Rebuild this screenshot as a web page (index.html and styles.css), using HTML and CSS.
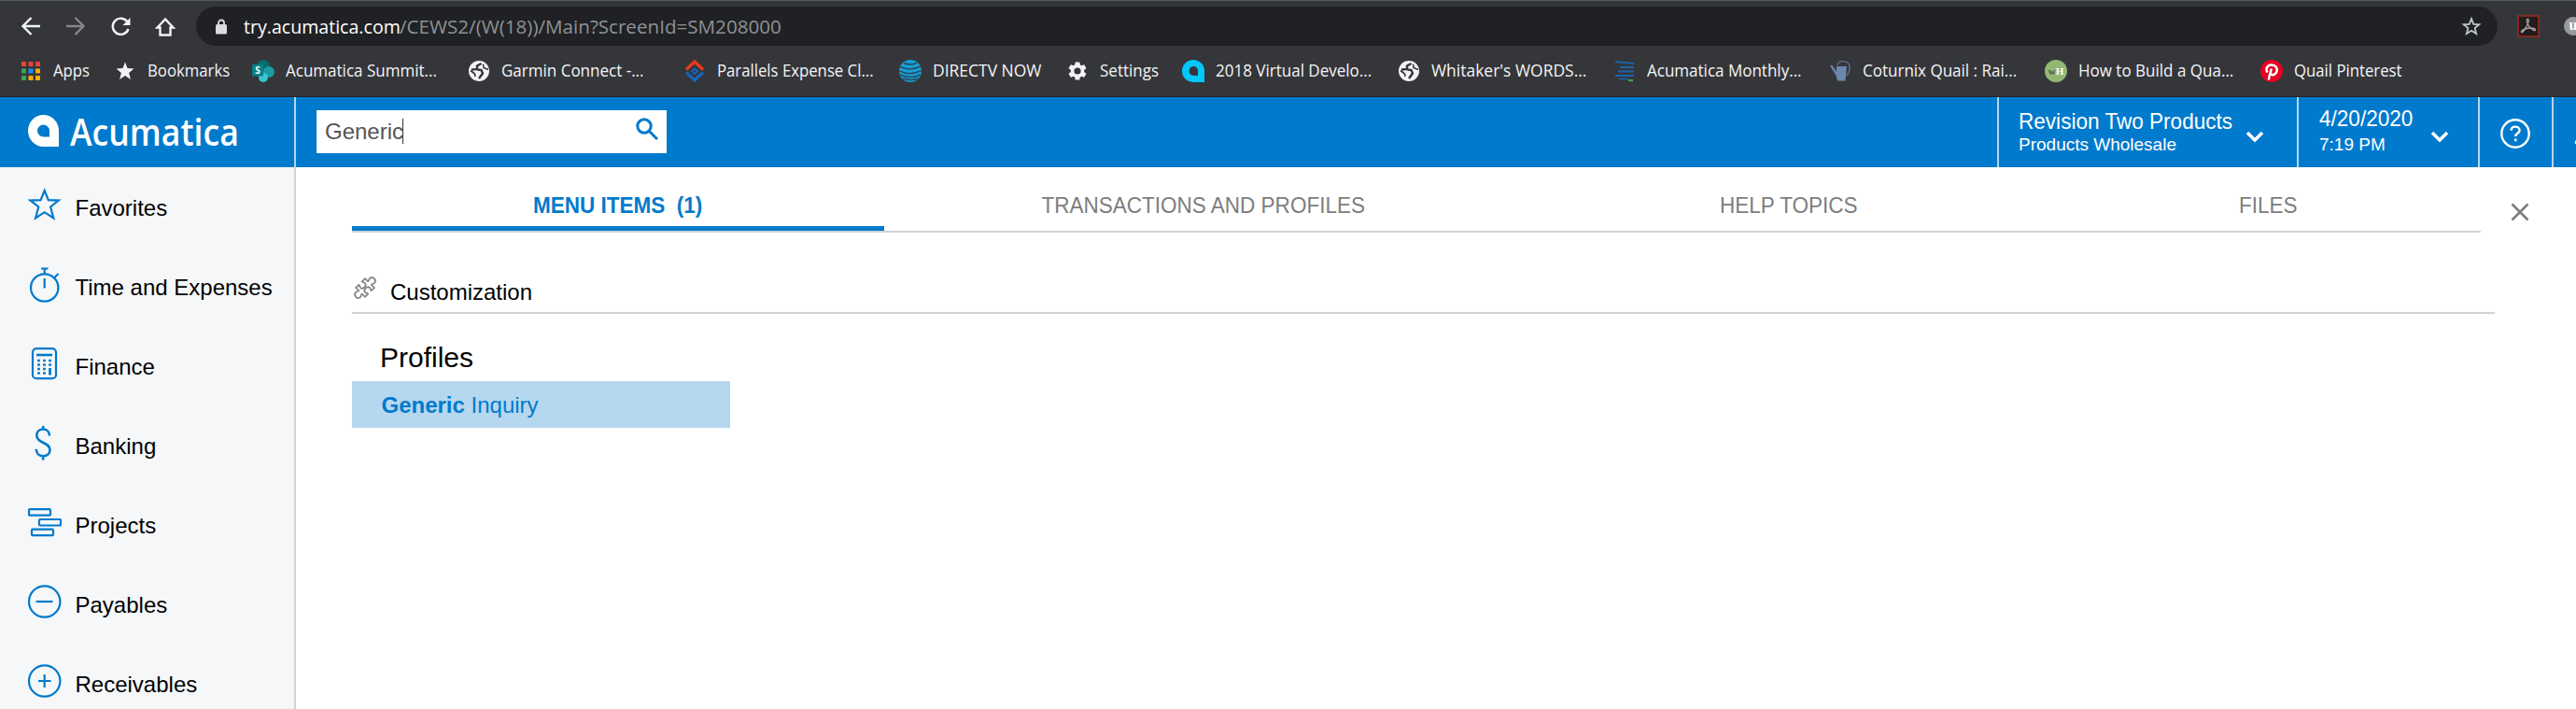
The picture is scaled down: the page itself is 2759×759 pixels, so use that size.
FILE: index.html
```html
<!DOCTYPE html>
<html lang="en">
<head>
<meta charset="utf-8">
<title>Acumatica</title>
<link rel="stylesheet" href="styles.css">
</head>
<body>
<svg class="defs" aria-hidden="true">
  <symbol id="globe" viewBox="0 0 24 24"><circle cx="12" cy="12" r="11" fill="#f1f3f4"/><path d="M14.500 4 10 6.500v3.500l-6 .5M10.500 10.500l4 .5 1.500 3.500-4 5.500" fill="none" stroke="#35363a" stroke-width="2.400"/><path d="M3 11.500l4.500 3.500.5 3M16.500 4.500l.5 4 5 2" fill="none" stroke="#35363a" stroke-width="1.600"/></symbol>
</svg>

<div class="browser">
  <div class="toolbar">
    <svg class="nav" viewBox="0 0 210 50" fill="none" stroke="#f1f3f4" stroke-width="2.400">
      <path d="M43 27H25M33.500 18 24.500 27l9 9"/>
      <path d="M71 27h18M80.500 18l9 9-9 9" stroke="#85878a"/>
      <path d="M136.500 22.500A8.600 8.600 0 1 0 137.500 30"/><path d="M139.500 18v8h-8z" fill="#f1f3f4" stroke="none"/>
      <path d="M177 19.500l-8.500 9h3v8h11v-8h3z"/>
    </svg>
    <div class="omnibox">
      <svg class="lock" viewBox="0 0 12 17"><path d="M3 7V4.500a3 3 0 0 1 6 0V7" fill="none" stroke="#dadce0" stroke-width="1.800"/><rect y="6" width="12" height="10.500" rx="1.500" fill="#dadce0"/></svg>
      <div class="url"><span class="host">try.acumatica.com</span><span class="path">/CEWS2/(W(18))/Main?ScreenId=SM208000</span></div>
      <svg class="fav" viewBox="0 0 24 24" fill="none" stroke="#c4c7ca" stroke-width="2"><path d="M12 3.500l2.500 6.100 6.500.5-5 4.200 1.600 6.400L12 17.200l-5.600 3.500L8 14.300l-5-4.200 6.500-.5z"/></svg>
    </div>
    <svg class="pdf" viewBox="0 0 24 24"><rect x="1" y="1" width="22" height="22" fill="#231c1e" stroke="#9c2a1c" stroke-width="1.600"/><path d="M11 4.500c3 0 .5 5-1.500 8.500-1.500 3-4 6.500-5 5.500-.8-1.500 4-4.500 9-4.500 4.500-.2 6 .8 6 2 0 1.500-3.500 0-6.500-3.500C10.500 9 9.500 4.800 11 4.500z" fill="none" stroke="#aaa5a5" stroke-width="1.300"/></svg>
    <div class="ublock">u</div>
  </div>
  <div class="bookmarks">
    <div class="bm snug"><svg viewBox="0 0 24 24"><path fill="#ea4335" d="M2 2h5v5H2zM9.500 2h5v5h-5zM17 2h5v5h-5z"/><path fill="#34a853" d="M2 9.500h5v5H2zM2 17h5v5H2z"/><path fill="#1a8cff" d="M9.500 9.500h5v5h-5z"/><path fill="#fbab05" d="M17 9.500h5v5h-5zM9.500 17h5v5h-5zM17 17h5v5h-5z"/></svg><span>Apps</span></div>
    <div class="bm snug"><svg viewBox="0 0 24 24"><path fill="#f1f3f4" d="M12 2.500l2.500 6.600 7 .4-5.400 4.500 1.800 7L12 17l-5.900 4 1.800-7-5.400-4.500 7-.4z"/></svg><span>Bookmarks</span></div>
    <div class="bm"><svg viewBox="0 0 24 24"><circle cx="12" cy="7" r="7" fill="#036c70"/><circle cx="18" cy="13" r="6" fill="#1a9ba1"/><circle cx="12" cy="19" r="5" fill="#37c6d0"/><rect y="5" width="12" height="12.500" rx="1" fill="#038387"/><text class="sp" x="6" y="15">S</text></svg><span>Acumatica Summit...</span></div>
    <div class="bm"><svg><use href="#globe"/></svg><span>Garmin Connect -...</span></div>
    <div class="bm snug"><svg viewBox="0 0 24 24" fill="none" stroke-width="3.400"><path d="M3 10.500l9-8.500 9 8.500" stroke="#e8391e"/><path d="M3 13.500l9 8.500 9-8.500" stroke="#1664b8"/><path d="M12 9.500l2.800 2.800L12 15l-2.800-2.700z" stroke="#1664b8" stroke-width="2"/></svg><span>Parallels Expense Cl...</span></div>
    <div class="bm loose"><svg viewBox="0 0 24 24"><circle cx="12" cy="12" r="12" fill="#159fd5"/><g fill="none" stroke="#2c4a5c" stroke-width="1.500"><path d="M5 3.500q7 3 14 0M1 7.500q11 5 22-.5M0 12q12 5.500 24-.5M1 16q11 5 22 0M4 20q9 3 16 0"/></g></svg><span>DIRECTV NOW</span></div>
    <div class="bm"><svg viewBox="0 0 24 24"><path fill="#f1f3f4" d="M19.140 12.940c.04-.3.06-.61.06-.94s-.02-.64-.07-.94l2.030-1.580c.18-.14.23-.41.12-.61l-1.920-3.320c-.12-.22-.37-.29-.59-.22l-2.390.96c-.5-.38-1.030-.7-1.620-.94L14.400 2.810c-.04-.24-.24-.41-.48-.41h-3.840c-.24 0-.43.17-.47.41L9.250 5.350c-.59.24-1.130.57-1.620.94L5.240 5.330c-.22-.08-.47 0-.59.22L2.740 8.870c-.12.21-.08.47.12.61l2.030 1.580c-.05.3-.09.63-.09.940s.02.64.07.94l-2.030 1.580c-.18.14-.23.41-.12.61l1.920 3.320c.12.22.37.29.59.22l2.390-.96c.5.38 1.030.7 1.620.94l.36 2.540c.05.24.24.41.48.41h3.840c.24 0 .44-.17.47-.41l.36-2.540c.59-.24 1.130-.56 1.620-.94l2.390.96c.22.08.47 0 .59-.22l1.920-3.320c.12-.22.07-.47-.12-.61zM12 15.600A3.600 3.600 0 1 1 12 8.400a3.600 3.600 0 0 1 0 7.200z"/></svg><span>Settings</span></div>
    <div class="bm"><svg viewBox="0 0 24 24"><path fill="#00c8fa" fill-rule="evenodd" d="M12 0a12 12 0 0 1 12 12v12H12A12 12 0 0 1 12 0zM12.500 7a5 5 0 0 0 0 10H17v-5.500A4.500 4.500 0 0 0 12.500 7z"/></svg><span>2018 Virtual Develo...</span></div>
    <div class="bm loose"><svg><use href="#globe"/></svg><span>Whitaker's WORDS...</span></div>
    <div class="bm"><svg viewBox="0 0 24 24" stroke="#1b62ac" stroke-width="2.200" fill="none"><path d="M2 2l20 2M7 8h15M5 12.500h17M2 17h20"/><path d="M6 20.500h10" stroke-width="1.600"/><path d="M16 22h5" stroke="#46a04c"/></svg><span>Acumatica Monthly...</span></div>
    <div class="bm"><svg viewBox="0 0 24 24"><path fill="#6b87ad" d="M8 7h11l-1.500 15.500H9L7.500 17 1 6h2.500L8 13z"/><path d="M9 6c0-6 12-6 13 1 .5 5-1 8-4 10" fill="none" stroke="#5c6e87" stroke-width="1.500"/></svg><span>Coturnix Quail : Rai...</span></div>
    <div class="bm"><svg viewBox="0 0 24 24"><circle cx="12" cy="12" r="12" fill="#93b874"/><text class="wh" x="12" y="16"><tspan fill="#4b5b45">w</tspan><tspan fill="#fff">H</tspan></text></svg><span>How to Build a Qua...</span></div>
    <div class="bm snug"><svg viewBox="0 0 24 24"><circle cx="12" cy="12" r="12" fill="#e60023"/><path d="M9 21.500c0-3 1.500-7 2.800-12M7.500 13.500C5 9.500 7.500 5.500 12 5.500c4.500 0 6.500 3.500 5.500 6.800-1 4-5.500 5-6.800 2.200" fill="none" stroke="#fff" stroke-width="2.500"/></svg><span>Quail Pinterest</span></div>
  </div>
</div>

<header class="header">
  <div class="brand">
    <svg viewBox="0 0 33 34"><path fill="#fff" fill-rule="evenodd" d="M16.500 0A16.500 17 0 0 1 33 17v17H16.500A16.500 17 0 0 1 16.500 0zM16.500 10.500a6.500 6.500 0 1 0 0 13H23V17a6.500 6.500 0 0 0-6.500-6.500z"/></svg>
    <span>Acumatica</span>
  </div>
  <div class="search">
    <span class="query">Generic</span><i class="caret"></i>
    <svg viewBox="0 0 24 24" fill="none" stroke="#007acc" stroke-width="3"><circle cx="9" cy="9" r="7.200"/><path d="M14 14l9 9"/></svg>
  </div>
  <div class="cell company"><div class="lines"><b>Revision Two Products</b><small>Products Wholesale</small></div><svg class="chev" viewBox="0 0 20 12"><path d="M2 2l8 8 8-8"/></svg></div>
  <div class="cell date"><div class="lines"><b>4/20/2020</b><small>7:19 PM</small></div><svg class="chev" viewBox="0 0 20 12"><path d="M2 2l8 8 8-8"/></svg></div>
  <div class="cell help"><svg viewBox="0 0 32 32" fill="none" stroke="#fff" stroke-width="2.400"><circle cx="16" cy="16" r="14.700"/><path d="M11.500 12.800c0-2.600 2-4.200 4.500-4.200s4.600 1.500 4.600 3.900c0 3.300-4.400 3.300-4.400 6.500"/><path d="M16.200 21.500v2.800" stroke-width="2.600"/></svg></div>
  <div class="cell user"><svg viewBox="0 0 32 32"><path d="M2 20c0-6 7-8 14-8s14 2 14 8" fill="none" stroke="#fff" stroke-width="2.400"/></svg></div>
</header>

<div class="body">
  <nav class="side">
    <a><svg viewBox="0 0 36 40"><path d="M17.700 4l4.100 10.200 11 .4-8.700 6.900 3.200 12-9.600-6.300-9.600 6.300 3.200-12-8.700-6.900 11-.4z"/></svg>Favorites</a>
    <a><svg viewBox="0 0 36 40"><circle cx="17.700" cy="23" r="14.700"/><path d="M17.700 8V3M14 2.500h7.500M17.700 13v10.500M28.500 12l4-4"/></svg>Time and Expenses</a>
    <a><svg viewBox="0 0 36 40"><rect x="5" y="3.200" width="25" height="32" rx="4"/><path d="M9 10h17" stroke-width="2.600"/><path d="M11.500 14.700v17M17.500 14.700v17" stroke-width="2.800" stroke-dasharray="2.500 2"/><path d="M23.500 14.700v7" stroke-width="2.800" stroke-dasharray="2.500 2"/><path d="M23.500 24v7.500" stroke-width="2.800"/></svg>Finance</a>
    <a><svg viewBox="0 0 36 40"><path d="M23 11.500C23 7 20 4.500 16.200 4.500S9.300 7 9.300 11.200c0 8.500 14.200 7 14.200 15.300 0 4-3 6.700-7.200 6.700s-7.500-2.700-7.500-7.500M16.200 1v4M16.200 33v4.500" stroke-width="2.600"/></svg>Banking</a>
    <a><svg viewBox="0 0 36 40"><rect x="1" y="5.200" width="23" height="6.500" rx="1"/><rect x="12" y="16" width="23" height="6.500" rx="1"/><rect x="4" y="26.700" width="23" height="6.500" rx="1"/></svg>Projects</a>
    <a><svg viewBox="0 0 36 40"><circle cx="17.700" cy="19" r="16.700"/><path d="M8.500 19h18"/></svg>Payables</a>
    <a><svg viewBox="0 0 36 40"><circle cx="17.700" cy="19" r="16.700"/><path d="M11 19h13.500M17.700 12v14"/></svg>Receivables</a>
  </nav>
  <main class="main">
    <div class="top">
      <div class="tabs">
        <div class="tab on"><span>MENU ITEMS&nbsp; (1)</span></div>
        <div class="tab"><span>TRANSACTIONS AND PROFILES</span></div>
        <div class="tab"><span>HELP TOPICS</span></div>
        <div class="tab"><span>FILES</span></div>
      </div>
      <svg class="close" viewBox="0 0 20 20"><path d="M1.500 1.500l17 17M18.500 1.500l-17 17" stroke="#7d7d7d" stroke-width="2.600"/></svg>
    </div>
    <h2 class="group"><svg viewBox="0 0 26 26"><path transform="rotate(45 13 13)" d="M6 6h4.500c.8-1-1-1.500-1-3.500 0-4.500 7-4.500 7 0 0 2-1.800 2.500-1 3.500H20v4.500c-1 .8-1.500-1-3.200-1-4 0-4 7 0 7 1.700 0 2.200-1.800 3.200-1V20h-4.500c-.8 1 1 1.500 1 3.500 0 4.500-7 4.500-7 0 0-2 1.800-2.500 1-3.500H6v-4.500c1-.8 1.500 1 3.200 1 4 0 4-7 0-7-1.700 0-2.200 1.800-3.200 1z" fill="none" stroke="#858585" stroke-width="1.700"/></svg>Customization</h2>
    <h3 class="sub">Profiles</h3>
    <a class="hit"><b>Generic</b> Inquiry</a>
  </main>
</div>
</body>
</html>
```
FILE: styles.css
```css
* { box-sizing: border-box; }
body { margin: 0; width: 2759px; height: 759px; overflow: hidden; background: #fff; font-family: "Liberation Sans", Arial, sans-serif; font-size: 24px; color: #000; }
svg { display: block; flex: none; }
.defs { display: none; }

.browser { height: 104px; background: #35363a; border-top: 1px solid #4f5f52; border-bottom: 1px solid #232427; font-family: "Open Sans", "Noto Sans", sans-serif; color: #f4f5f6; }
.toolbar { display: flex; height: 48px; overflow: hidden; }
.nav { width: 210px; height: 50px; }
.omnibox { display: flex; flex: none; width: 2465px; height: 42px; margin-top: 6px; padding: 0 17px 0 21px; align-items: center; background: #202124; border-radius: 21px; }
.lock { width: 12px; height: 17px; }
.url { display: flex; flex: 1; margin-left: 18px; font-size: 20.500px; line-height: 42px; white-space: nowrap; }
.url span { transform-origin: 0 50%; }
.host { width: 167px; color: #fff; transform: scaleX(.955); }
.path { color: #8f9296; transform: scaleX(1.005); }
.fav { width: 22px; height: 24px; }
.pdf { width: 24px; height: 24px; margin: 15px 0 0 21px; }
.ublock { flex: none; width: 20px; height: 20px; margin: 17px 0 0 26px; border-radius: 10px; background: #9a9a9a; color: #fff; font: bold 16px/18px "Liberation Serif", serif; text-align: center; }
.bookmarks { display: grid; grid-template-columns: 101px 148px 231px 231px 231px 179px 124px 231px 231px 231px 231px 231px 200px; height: 53px; padding-left: 21px; }
.bm { display: flex; gap: 12px; align-items: center; font-size: 18px; line-height: 24px; white-space: nowrap; }
.bm svg { width: 24px; height: 24px; }
.bm span { transform: scaleX(.945); transform-origin: 0 50%; padding-bottom: 1px; }
.bm.snug span { transform: scaleX(.93); }
.bm.loose span { transform: scaleX(.97); }
.sp { font: bold 10px "Open Sans", sans-serif; fill: #fff; text-anchor: middle; }
.wh { font: bold 11px "Liberation Serif", serif; text-anchor: middle; }

.header { display: flex; height: 75px; background: #007acc; color: #fff; }
.brand { display: flex; width: 317px; padding: 19px 0 0 30px; border-right: 2px solid #b2d7f0; }
.brand svg { width: 33px; height: 34px; }
.brand span { margin-left: 12px; font: 600 40px/36px "Open Sans", sans-serif; transform: scaleX(.89); transform-origin: 0 50%; }
.search { display: flex; width: 375px; height: 46px; margin: 14px auto 0 22px; padding: 0 9px; background: #fff; color: #555; line-height: 45px; }
.caret { width: 1px; height: 27px; margin: 9px 0 0 -1px; background: #333; }
.search svg { width: 24px; height: 24px; margin: 8px 0 0 auto; }
.cell { display: flex; border-left: 2px solid #b2d7f0; }
.company { width: 321px; padding-left: 21px; }
.date { width: 194px; padding-left: 22px; }
.lines { display: flex; flex-direction: column; }
.lines b { font-weight: 400; font-size: 24px; line-height: 26px; white-space: nowrap; transform: scaleX(.94); transform-origin: 0 50%; }
.lines small { font-size: 19px; line-height: 22px; }
.company .lines { padding-top: 13px; width: 243px; }
.company small { margin-top: 1px; }
.date .lines { padding-top: 10px; width: 119px; }
.date small { margin-top: 4px; }
.chev { width: 20px; height: 12px; margin-top: 36px; fill: none; stroke: #fff; stroke-width: 3.500px; }
.help { width: 79px; padding: 23px 0 0 22px; }
.help svg { width: 32px; height: 32px; }
.user { width: 26px; padding: 30px 0 0 22px; overflow: hidden; }
.user svg { width: 32px; height: 32px; }

.body { display: flex; height: 580px; }
.side { width: 317px; padding-top: 21px; background: #f5f7f9; border-right: 2px solid #d2d3d9; }
.side a { display: flex; gap: 14.500px; height: 85px; padding-left: 30px; line-height: 46px; white-space: nowrap; }
.side svg { width: 36px; height: 40px; fill: none; stroke: #007acc; stroke-width: 2.200px; }
.main { flex: 1; padding-left: 60px; }
.top { display: flex; }
.tabs { display: grid; grid-template-columns: 570px 684px 570px 456px; width: 2280px; height: 70px; border-bottom: 2px solid #d2d3d9; }
.tab { padding-top: 28px; font-size: 24px; line-height: 26px; color: #7d7d7d; text-align: center; white-space: nowrap; }
.tab span { display: inline-block; transform: scaleX(.938); }
.tab.on { color: #007acc; font-weight: 700; border-bottom: 5px solid #007acc; }
.close { width: 20px; height: 20px; margin: 38px 0 0 32px; }
.group { display: flex; width: 2295px; height: 87px; margin: 0; padding-top: 46px; border-bottom: 2px solid #d2d3d9; font-weight: 400; font-size: 24px; line-height: 35px; }
.group svg { width: 26px; height: 26px; margin: 0 14px 0 1px; overflow: visible; }
.sub { margin: 0; padding: 29px 0 0 30px; height: 72px; font-weight: 400; font-size: 30px; line-height: 36px; }
.hit { display: block; width: 405px; height: 50px; padding-left: 31.500px; background: #b5d7ef; color: #007acc; line-height: 52px; }
```
